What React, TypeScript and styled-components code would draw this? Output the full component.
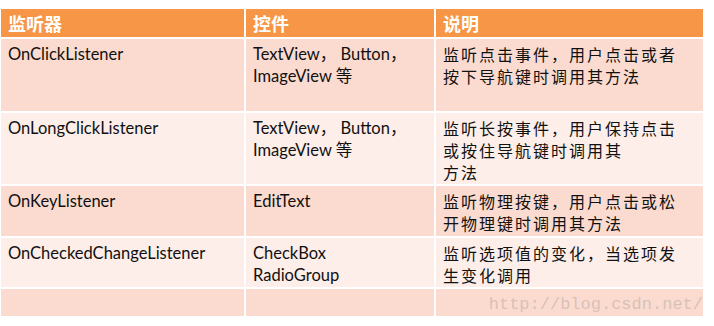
import { Fragment } from "react";
import styled, { createGlobalStyle } from "styled-components";

const GlobalStyle = createGlobalStyle`
  html, body {
    margin: 0;
    padding: 0;
    background: #ffffff;
  }
`;

const Page = styled.div`
  position: relative;
  width: 714px;
  height: 326px;
  padding: 9px 0 0 1px;
  box-sizing: border-box;
  background: #ffffff;
`;

const Table = styled.div`
  display: grid;
  grid-template-columns: 243px 188px 267px;
  column-gap: 2px;
  row-gap: 2px;
  width: 702px;
`;

const HeadCell = styled.div`
  height: 28px;
  background: #f79646;
  color: #ffffff;
  font-family: "Noto Sans CJK SC", sans-serif;
  font-weight: 700;
  font-size: 18px;
  line-height: 28px;
  padding-left: 7px;
  box-sizing: border-box;
`;

const Cell = styled.div<{ $shade: "dark" | "light"; $h: number; $cjk?: boolean }>`
  height: ${({ $h }) => $h}px;
  background: ${({ $shade }) => ($shade === "dark" ? "#fbdbcf" : "#fdeee9")};
  color: #111111;
  box-sizing: border-box;
  padding: 4px 6px 0 7px;
  font-family: ${({ $cjk }) =>
    $cjk ? '"Noto Sans CJK SC", sans-serif' : '"Lato", "Noto Sans CJK SC", sans-serif'};
  font-size: ${({ $cjk }) => ($cjk ? "16px" : "16.5px")};
  letter-spacing: ${({ $cjk }) => ($cjk ? "2px" : "0")};
  line-height: 22px;
  white-space: pre-line;
`;

// csdn watermark over the last row
const Watermark = styled.div`
  position: absolute;
  right: 11px;
  bottom: 12px;
  font-family: "Liberation Mono", monospace;
  font-size: 17px;
  color: rgba(160, 150, 145, 0.4);
`;

const rows = [
  {
    h: 72,
    shade: "dark" as const,
    name: "OnClickListener",
    widgets: "TextView， Button，\nImageView 等",
    desc: "监听点击事件，用户点击或者\n按下导航键时调用其方法",
  },
  {
    h: 71,
    shade: "light" as const,
    name: "OnLongClickListener",
    widgets: "TextView， Button，\nImageView 等",
    desc: "监听长按事件，用户保持点击\n或按住导航键时调用其\n方法",
  },
  {
    h: 50,
    shade: "dark" as const,
    name: "OnKeyListener",
    widgets: "EditText",
    desc: "监听物理按键，用户点击或松\n开物理键时调用其方法",
  },
  {
    h: 49,
    shade: "light" as const,
    name: "OnCheckedChangeListener",
    widgets: "CheckBox\nRadioGroup",
    desc: "监听选项值的变化，当选项发\n生变化调用",
  },
  { h: 27, shade: "dark" as const, name: "", widgets: "", desc: "" },
];

export default function App() {
  return (
    <Page>
      <GlobalStyle />
      <Table>
        <HeadCell>监听器</HeadCell>
        <HeadCell>控件</HeadCell>
        <HeadCell>说明</HeadCell>
        {rows.map((r, i) => (
          <Fragment key={i}>
            <Cell $shade={r.shade} $h={r.h}>
              {r.name}
            </Cell>
            <Cell $shade={r.shade} $h={r.h}>
              {r.widgets}
            </Cell>
            <Cell $shade={r.shade} $h={r.h} $cjk>
              {r.desc}
            </Cell>
          </Fragment>
        ))}
      </Table>
      <Watermark>http://blog.csdn.net/</Watermark>
    </Page>
  );
}
